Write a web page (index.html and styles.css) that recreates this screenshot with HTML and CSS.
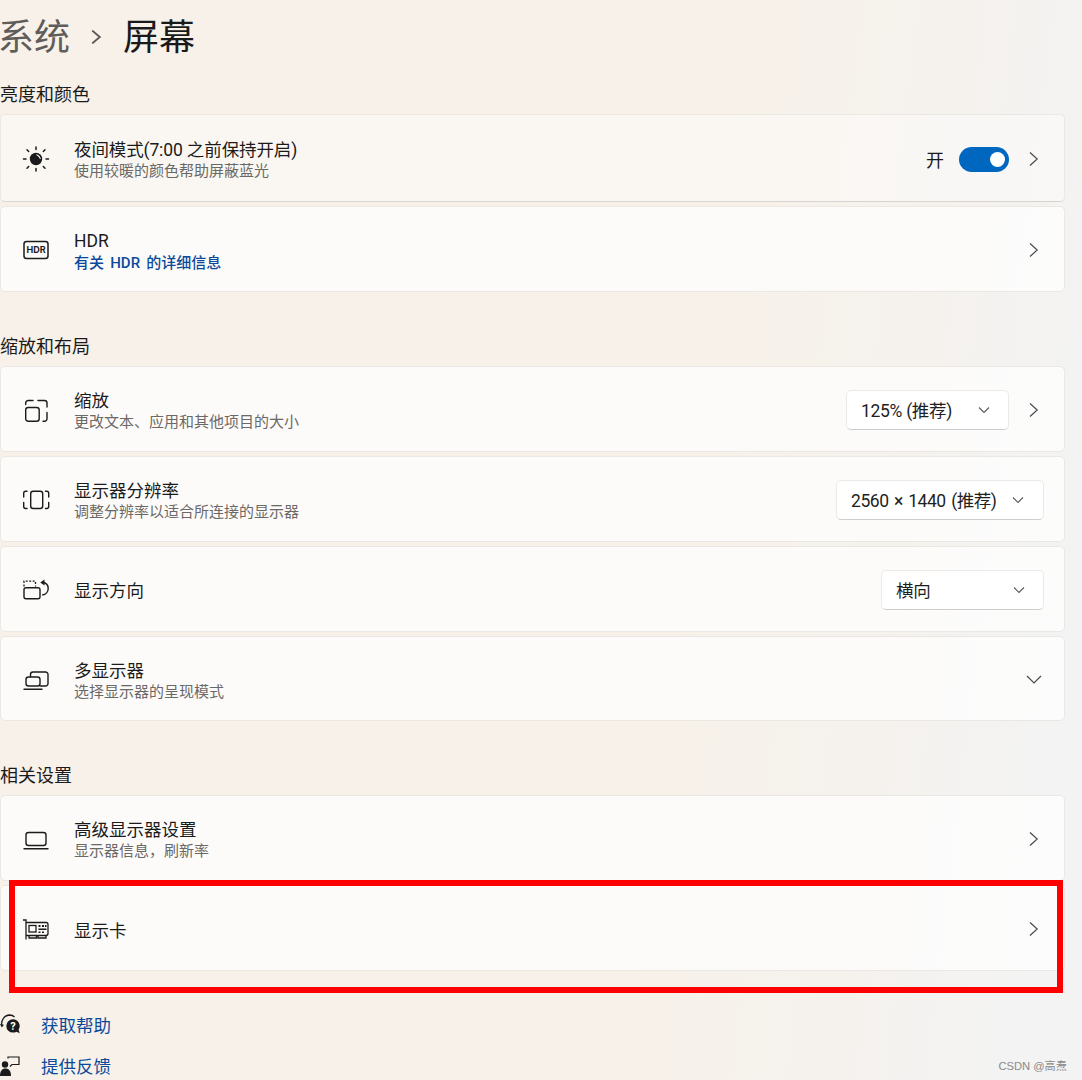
FILE: index.html
```html
<!DOCTYPE html>
<html lang="zh-CN">
<head>
<meta charset="utf-8">
<title>屏幕</title>
<link rel="stylesheet" href="styles.css">
</head>
<body>
<main class="page">
  <header class="crumbs">
    <span class="crumb-parent">系统</span>
    <svg class="crumb-sep" width="14" height="14" viewBox="0 0 14 14"><path d="M4.200.6 11.800 7l-7.600 6.400" fill="none" stroke="#5d5a58" stroke-width="1.900"/></svg>
    <span class="crumb-current">屏幕</span>
  </header>

  <section class="group">
    <h2 class="group-title">亮度和颜色</h2>
    <div class="row row-tall row-hover">
      <svg class="icon" width="28" height="28" viewBox="0 0 28 28"><path d="M14 2v2.500M14 23.500V26M1.500 14h2.500M24 14h2.500M5 4.800 6.700 6.500M21.300 21.500 23 23.200M5 23.200l1.700-1.700M21.300 6.500 23 4.800" fill="none" stroke="#1b1b1b" stroke-width="1.500" stroke-linecap="round"/><circle cx="14" cy="14" r="6.200" fill="#1b1b1b"/><path d="M14.600 9.800a4.600 4.600 0 0 1 3.700 3.900c-.9-1.800-2-3-3.700-3.900z" fill="#fff" stroke="#fff" stroke-width=".8"/></svg>
      <div class="text"><div class="label label-tight">夜间模式(7:00 之前保持开启)</div><div class="sub">使用较暖的颜色帮助屏蔽蓝光</div></div>
      <div class="trail">
        <span class="state">开</span>
        <span class="toggle"><span class="knob"></span></span>
        <svg class="chev" width="20" height="20" viewBox="0 0 20 20"><path d="M6 3.500 13.200 10 6 16.500" fill="none" stroke="#4a4a4a" stroke-width="1.200"/></svg>
      </div>
    </div>
    <div class="row">
      <svg class="icon" width="28" height="28" viewBox="0 0 28 28"><rect x="2" y="5.500" width="24" height="17" rx="2.500" fill="none" stroke="#1b1b1b" stroke-width="1.500"/><text class="hdr-mark" x="14" y="17.300" text-anchor="middle">HDR</text></svg>
      <div class="text text-link"><div class="label">HDR</div><a class="sub-link">有关 HDR 的详细信息</a></div>
      <div class="trail">
        <svg class="chev" width="20" height="20" viewBox="0 0 20 20"><path d="M6 3.500 13.200 10 6 16.500" fill="none" stroke="#4a4a4a" stroke-width="1.200"/></svg>
      </div>
    </div>
  </section>

  <section class="group group-next">
    <h2 class="group-title">缩放和布局</h2>
    <div class="row">
      <svg class="icon" width="28" height="28" viewBox="0 0 28 28"><g fill="none" stroke="#1b1b1b" stroke-width="1.400" stroke-linecap="round"><rect x="3.700" y="11.500" width="13.500" height="13.700" rx="2.500"/><path d="M3.700 8.500V7A2.500 2.500 0 0 1 6.200 4.500H11M16 4.500h6.500A2.500 2.500 0 0 1 25 7v4M25 16.500v6.200a2.500 2.500 0 0 1-2.500 2.500H21"/></g></svg>
      <div class="text"><div class="label">缩放</div><div class="sub">更改文本、应用和其他项目的大小</div></div>
      <div class="trail">
        <div class="select select-scale"><span class="select-text">125% (推荐)</span><svg width="14" height="14" viewBox="0 0 14 14"><path d="M2 4.500 7 9.500l5-5" fill="none" stroke="#5a5a5a" stroke-width="1.100"/></svg></div>
        <svg class="chev" width="20" height="20" viewBox="0 0 20 20"><path d="M6 3.500 13.200 10 6 16.500" fill="none" stroke="#4a4a4a" stroke-width="1.200"/></svg>
      </div>
    </div>
    <div class="row">
      <svg class="icon" width="28" height="28" viewBox="0 0 28 28"><g fill="none" stroke="#1b1b1b" stroke-width="1.400" stroke-linecap="round"><rect x="8.700" y="5.200" width="12" height="17.300" rx="2.500"/><path d="M5 5.200H3.700a2 2 0 0 0-2 2V11M1.700 16.500v4a2 2 0 0 0 2 2H5M23.500 5.200h1.200a2 2 0 0 1 2 2V11M26.700 16.500v4a2 2 0 0 1-2 2h-1.200"/></g></svg>
      <div class="text"><div class="label">显示器分辨率</div><div class="sub">调整分辨率以适合所连接的显示器</div></div>
      <div class="trail">
        <div class="select select-res"><span class="select-text">2560 × 1440 (推荐)</span><svg width="14" height="14" viewBox="0 0 14 14"><path d="M2 4.500 7 9.500l5-5" fill="none" stroke="#5a5a5a" stroke-width="1.100"/></svg></div>
      </div>
    </div>
    <div class="row">
      <svg class="icon" width="28" height="28" viewBox="0 0 28 28"><g fill="none" stroke="#1b1b1b" stroke-linecap="butt"><path d="M2 10.500V5.200h11.500v5.300" stroke-width="1.300" stroke-dasharray="2 1.500"/><rect x="2" y="11.800" width="16" height="11" rx="2" stroke-width="1.400"/><path d="M20.500 6.500c3.500.3 5.700 2.800 5.700 6s-2.300 6-6 6.500" stroke-width="1.400"/></g><path d="M22.500 3.500v6l-4.300-3z" fill="#1b1b1b"/></svg>
      <div class="text"><div class="label">显示方向</div></div>
      <div class="trail">
        <div class="select select-dir"><span class="select-text">横向</span><svg width="14" height="14" viewBox="0 0 14 14"><path d="M2 4.500 7 9.500l5-5" fill="none" stroke="#5a5a5a" stroke-width="1.100"/></svg></div>
      </div>
    </div>
    <div class="row row-short">
      <svg class="icon" width="28" height="28" viewBox="0 0 28 28"><g fill="none" stroke="#1b1b1b" stroke-width="1.400" stroke-linecap="round"><path d="M8.500 10.500V8.500A2.500 2.500 0 0 1 11 6h12.500A2.500 2.500 0 0 1 26 8.500v9a2.500 2.500 0 0 1-2.500 2.500H18"/><rect x="4" y="11" width="14" height="9" rx="2.500"/><path d="M2 23.200h18"/></g></svg>
      <div class="text"><div class="label">多显示器</div><div class="sub">选择显示器的呈现模式</div></div>
      <div class="trail">
        <svg class="chev" width="20" height="20" viewBox="0 0 20 20"><path d="M3 6 10 13l7-7" fill="none" stroke="#4a4a4a" stroke-width="1.200"/></svg>
      </div>
    </div>
  </section>

  <section class="group group-next">
    <h2 class="group-title">相关设置</h2>
    <div class="row">
      <svg class="icon" width="28" height="28" viewBox="0 0 28 28"><g fill="none" stroke="#1b1b1b" stroke-width="1.400" stroke-linecap="round"><rect x="4" y="7.500" width="20" height="13" rx="2.500"/><path d="M2 23.700h24"/></g></svg>
      <div class="text"><div class="label">高级显示器设置</div><div class="sub">显示器信息，刷新率</div></div>
      <div class="trail">
        <svg class="chev" width="20" height="20" viewBox="0 0 20 20"><path d="M6 3.500 13.200 10 6 16.500" fill="none" stroke="#4a4a4a" stroke-width="1.200"/></svg>
      </div>
    </div>
    <div class="row">
      <svg class="icon" width="28" height="28" viewBox="0 0 28 28"><g fill="none" stroke="#1b1b1b" stroke-width="1.300"><path d="M1 5h3v19.500"/><path d="M4 7.500h20a2 2 0 0 1 2 2v9a2 2 0 0 1-2 2H4"/><rect x="7" y="10.500" width="7" height="6.500"/><path d="M7 20.500V23h7.500v-2.500M16 20.500V23h8v-2.500"/></g><path d="M16.500 10h2v2h-2zM20 10h2v2h-2zM23 10h1.500v2H23zM16.500 13.500h8V15h-8zM16.500 16.500h2V18h-2zM20 16.500h2V18h-2z" fill="#1b1b1b"/></svg>
      <div class="text text-single"><div class="label">显示卡</div></div>
      <div class="trail">
        <svg class="chev" width="20" height="20" viewBox="0 0 20 20"><path d="M6 3.500 13.200 10 6 16.500" fill="none" stroke="#4a4a4a" stroke-width="1.200"/></svg>
      </div>
    </div>
  </section>

  <nav class="links">
    <a class="link">
      <svg class="link-icon" width="20" height="22" viewBox="0 0 20 22"><path d="M1.700 12C.8 6 4.500 1.200 9.500 1c2.200 0 3.800.7 5 2" fill="none" stroke="#1b1b1b" stroke-width="1.300"/><path d="M0 10l1.800 3.500L4 10.800z" fill="#1b1b1b"/><path d="M13 5.200a6.700 6.700 0 0 0 0 13.400c1.300 0 2.400-.3 3.400-.9l3.300 1.500-1.100-3.700A6.700 6.700 0 0 0 13 5.200z" fill="#1b1b1b"/><text class="help-mark" x="13" y="16" text-anchor="middle">?</text></svg>
      <span>获取帮助</span>
    </a>
    <a class="link">
      <svg class="link-icon" width="20" height="22" viewBox="0 0 20 22"><circle cx="5" cy="9.500" r="3.200" fill="#1b1b1b"/><path d="M0 21c0-5 2-7.500 5.500-7.500S11 16 11 21z" fill="#1b1b1b"/><path d="M8 3.500V2h11v7.500h-7l-2 2" fill="none" stroke="#1b1b1b" stroke-width="1.200"/></svg>
      <span>提供反馈</span>
    </a>
  </nav>
</main>
<div class="highlight"></div>
<div class="watermark">CSDN @高焘</div>
</body>
</html>
```
FILE: styles.css
```css
* { box-sizing: border-box; }
html, body { margin: 0; padding: 0; height: 1080px; overflow: hidden; }
body {
  position: relative;
  font-family: Roboto, "Noto Sans CJK SC", sans-serif;
  color: #1b1b1b;
  background: linear-gradient(97deg, #f7f1e9 0%, #f7f1e9 62%, #f5f2ee 80%, #f3f3f3 94%);
}
.page { width: 1065px; }
.crumbs { display: flex; align-items: center; height: 74px; padding-top: 2px; margin-left: -2px; font-size: 36px; line-height: 72px; }
.crumb-parent { color: #5f5c59; width: 72px; }
.crumb-sep { margin: 0 21px 2px 18px; }
.crumb-current { color: #1a1a1a; }
.group-title { margin: 0; height: 40px; font-size: 18px; font-weight: 400; line-height: 42px; }
.group-next { margin-top: 34px; }
.row {
  display: flex; align-items: center; height: 86px; margin-bottom: 4px; padding: 2px 20px 0 21px;
  background: rgba(255,255,255,.7); border: 1px solid #ebe8e4; border-radius: 5px;
}
.row-tall { height: 88px; }
.row-short { height: 85px; }
.row-hover { background: rgba(255,255,255,.42); border-bottom-color: #d9d4ce; }
.icon { flex: none; margin-right: 24px; }
.text { flex: 1; min-width: 0; padding-top: 1px; }
.text-link { padding-top: 3px; }
.text-single { padding-top: 3px; }
.label { font-size: 17.500px; line-height: 22px; }
.label-tight { letter-spacing: -.12px; }
.sub { margin-top: 1px; font-size: 15px; line-height: 18px; color: #6b6967; }
.sub-link { display: block; margin-top: 1px; font-size: 15px; line-height: 20px; font-weight: 500; word-spacing: 2.500px; color: #0b4a9a; }
.trail { display: flex; align-items: center; }
.state { font-size: 18px; margin-right: 15px; }
.toggle { display: flex; align-items: center; justify-content: flex-end; width: 50px; height: 25px; padding-right: 4px; background: #0067c0; border-radius: 13px; }
.knob { width: 15px; height: 15px; background: #fff; border-radius: 50%; }
.chev { display: block; margin-left: 15px; }
.select {
  display: flex; align-items: center; justify-content: space-between; height: 40px;
  padding: 0 17px 0 14px; font-size: 17.500px; letter-spacing: -.3px; color: #1f1f1f;
  background: #fff; border: 1px solid #ece9e6; border-bottom-color: #cfcdcb; border-radius: 5px;
}
.select-text { margin-bottom: 2px; }
.select-scale { width: 163px; }
.select-res { width: 208px; padding-right: 18px; letter-spacing: -.45px; word-spacing: 1.500px; }
.select-dir { width: 163px; }
.hdr-mark { font: 700 9px "Inter", sans-serif; fill: #1b1b1b; }
.help-mark { font: 700 10px "Inter", sans-serif; fill: #fff; }
.links { margin-top: 33px; }
.link { display: flex; align-items: center; height: 41px; font-size: 17.500px; color: #0b4a9a; }
.link-icon { flex: none; margin-right: 21px; }
.highlight { position: absolute; left: 9px; top: 880px; width: 1054px; height: 113px; border: 6px solid #ff0000; }
.watermark { position: absolute; right: 15px; top: 1058px; font-size: 11.200px; line-height: 16px; color: #8a8a8a; font-family: "Liberation Sans", "Noto Sans CJK SC", sans-serif; }
```
